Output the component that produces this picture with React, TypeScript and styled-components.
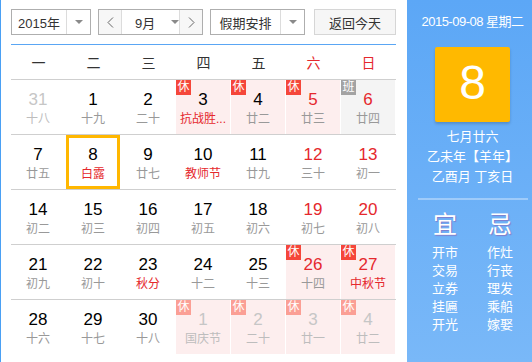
import React from 'react';
import styled, { createGlobalStyle } from 'styled-components';

const GlobalStyle = createGlobalStyle`
  html, body { margin: 0; padding: 0; background: #fff; }
  body { font-family: "Liberation Sans", "Noto Sans CJK SC", sans-serif; }
`;

const RED = '#e5282d';

const Frame = styled.div`
  width: 532px;
  height: 362px;
  display: flex;
  box-sizing: border-box;
  border-left: 1px solid #4aa0f4;
  overflow: hidden;
`;

const Main = styled.div`
  width: 406px;
  flex: none;
  box-sizing: border-box;
  padding: 9px 11px 0 10px;
`;

const Toolbar = styled.div`
  display: flex;
  height: 26px;
  gap: 7px;
`;

const SelectBox = styled.div<{ $w: number }>`
  width: ${p => p.$w}px;
  height: 26px;
  box-sizing: border-box;
  border: 1px solid #aeaeae;
  display: flex;
  align-items: stretch;
  background: #fff;
  font-size: 13px;
  color: #333;
  white-space: nowrap;
`;

const SelectLabel = styled.div`
  flex: 1;
  display: flex;
  align-items: center;
  justify-content: center;
`;

const ArrowPart = styled.div`
  width: 23px;
  border-left: 1px solid #dcdcdc;
  display: flex;
  align-items: center;
  justify-content: center;
`;

const Caret = styled.span`
  flex: none;
  width: 0;
  height: 0;
  border-left: 4px solid transparent;
  border-right: 4px solid transparent;
  border-top: 4px solid #8a8a8a;
`;

const StepButton = styled.div<{ $side: 'l' | 'r' }>`
  width: 22px;
  flex: none;
  background: #f7f7f7;
  display: flex;
  align-items: center;
  justify-content: center;
  ${p => (p.$side === 'l' ? 'border-right: 1px solid #dcdcdc;' : 'border-left: 1px solid #dcdcdc;')}
`;

const MonthCenter = styled.div`
  flex: 1;
  display: flex;
  align-items: center;
  padding-left: 13px;
  gap: 16px;
  white-space: nowrap;
`;

const TodayButton = styled.div`
  width: 82px;
  margin-left: 2px;
  height: 26px;
  box-sizing: border-box;
  border: 1px solid #d6d6d6;
  background: #f6f6f6;
  font-size: 13px;
  color: #333;
  display: flex;
  align-items: center;
  justify-content: center;
`;

const BlueRule = styled.div`
  height: 1px;
  background: #5aa6f4;
  margin-top: 9px;
`;

const WeekHead = styled.div`
  display: grid;
  grid-template-columns: repeat(7, 55px);
  height: 34px;
  border-bottom: 1px solid #cfcfcf;
`;

const WeekName = styled.div<{ $red: boolean }>`
  display: flex;
  align-items: center;
  justify-content: center;
  font-size: 14px;
  color: ${p => (p.$red ? RED : '#333')};
`;

const Row = styled.div<{ $last: boolean }>`
  display: grid;
  grid-template-columns: repeat(7, 55px);
  height: 54px;
  border-bottom: ${p => (p.$last ? 'none' : '1px solid #cfcfcf')};
`;

const Cell = styled.div<{ $bg: string; $selected: boolean }>`
  position: relative;
  box-sizing: border-box;
  height: 54px;
  border-right: 1px solid #fff;
  background: ${p => p.$bg};
  box-shadow: ${p => (p.$selected ? 'inset 0 0 0 3px #ffb700' : 'none')};
  padding-top: 10px;
  text-align: center;
`;

const DayNum = styled.div<{ $color: string }>`
  font-size: 17px;
  line-height: 20px;
  color: ${p => p.$color};
`;

const Lunar = styled.div<{ $color: string }>`
  font-size: 12px;
  line-height: 18px;
  color: ${p => p.$color};
  white-space: nowrap;
  overflow: hidden;
`;

const Badge = styled.span<{ $bg: string }>`
  position: absolute;
  left: 0;
  top: 0;
  width: 15px;
  height: 15px;
  background: ${p => p.$bg};
  color: #fff;
  font-size: 12px;
  line-height: 15px;
  text-align: center;
`;

const Side = styled.div`
  flex: 1;
  background: linear-gradient(180deg, #5ca7f6 0%, #79b8f8 100%);
  box-sizing: border-box;
  padding: 14px 0 0 6px;
  color: #fff;
  display: flex;
  flex-direction: column;
  align-items: center;
`;

const SideDate = styled.div`
  font-size: 13px;
  line-height: 16px;
  letter-spacing: -0.5px;
  white-space: nowrap;
`;

const BigDay = styled.div`
  margin-top: 17px;
  width: 75px;
  height: 75px;
  background: #ffb900;
  border-radius: 2px;
  box-shadow: 0 2px 3px rgba(0, 0, 0, 0.18);
  font-size: 48px;
  line-height: 71px;
  text-align: center;
`;

const LunarInfo = styled.div`
  margin-top: 5px;
  font-size: 13px;
  line-height: 20px;
  text-align: center;
  white-space: nowrap;
`;

const SideRule = styled.div`
  margin-top: 11px;
  width: 110px;
  height: 2px;
  background: rgba(255, 255, 255, 0.35);
`;

const YiJi = styled.div`
  margin-top: 11px;
  display: grid;
  grid-template-columns: 55px 55px;
  text-align: center;
`;

const YiJiTitle = styled.div`
  font-size: 24px;
  line-height: 28px;
  text-shadow: 1px 1px 1px rgba(150, 60, 150, 0.45);
  margin-bottom: 5px;
`;

const YiJiItem = styled.div`
  font-size: 13px;
  line-height: 18px;
`;

const ChevronLeft = () => (
  <svg width="7" height="11" viewBox="0 0 7 11">
    <polyline points="6,0.5 1,5.5 6,10.5" fill="none" stroke="#666" strokeWidth="1" />
  </svg>
);

const ChevronRight = () => (
  <svg width="7" height="11" viewBox="0 0 7 11">
    <polyline points="1,0.5 6,5.5 1,10.5" fill="none" stroke="#666" strokeWidth="1" />
  </svg>
);

type Day = {
  d: number;
  l: string;
  other?: boolean;
  fest?: boolean;
  badge?: 'rest' | 'work';
  sel?: boolean;
};

const weeks: Day[][] = [
  [
    { d: 31, l: '十八', other: true },
    { d: 1, l: '十九' },
    { d: 2, l: '二十' },
    { d: 3, l: '抗战胜...', fest: true, badge: 'rest' },
    { d: 4, l: '廿二', badge: 'rest' },
    { d: 5, l: '廿三', badge: 'rest' },
    { d: 6, l: '廿四', badge: 'work' },
  ],
  [
    { d: 7, l: '廿五' },
    { d: 8, l: '白露', fest: true, sel: true },
    { d: 9, l: '廿七' },
    { d: 10, l: '教师节', fest: true },
    { d: 11, l: '廿九' },
    { d: 12, l: '三十' },
    { d: 13, l: '初一' },
  ],
  [
    { d: 14, l: '初二' },
    { d: 15, l: '初三' },
    { d: 16, l: '初四' },
    { d: 17, l: '初五' },
    { d: 18, l: '初六' },
    { d: 19, l: '初七' },
    { d: 20, l: '初八' },
  ],
  [
    { d: 21, l: '初九' },
    { d: 22, l: '初十' },
    { d: 23, l: '秋分', fest: true },
    { d: 24, l: '十二' },
    { d: 25, l: '十三' },
    { d: 26, l: '十四', badge: 'rest' },
    { d: 27, l: '中秋节', fest: true, badge: 'rest' },
  ],
  [
    { d: 28, l: '十六' },
    { d: 29, l: '十七' },
    { d: 30, l: '十八' },
    { d: 1, l: '国庆节', other: true, badge: 'rest' },
    { d: 2, l: '二十', other: true, badge: 'rest' },
    { d: 3, l: '廿一', other: true, badge: 'rest' },
    { d: 4, l: '廿二', other: true, badge: 'rest' },
  ],
];

const weekNames = ['一', '二', '三', '四', '五', '六', '日'];
const yi = ['开市', '交易', '立券', '挂匾', '开光'];
const ji = ['作灶', '行丧', '理发', '乘船', '嫁娶'];

function cellBg(day: Day) {
  if (day.badge === 'rest') return '#fdeeee';
  if (day.badge === 'work') return '#f4f4f4';
  return '#fff';
}

function badgeBg(day: Day) {
  if (day.badge === 'work') return '#a3a3a3';
  return day.other ? '#fb9f95' : '#f5463a';
}

export default function App() {
  return (
    <>
      <GlobalStyle />
      <Frame>
        <Main>
          <Toolbar>
            <SelectBox $w={80}>
              <SelectLabel>2015年</SelectLabel>
              <ArrowPart>
                <Caret />
              </ArrowPart>
            </SelectBox>
            <SelectBox $w={105}>
              <StepButton $side="l">
                <ChevronLeft />
              </StepButton>
              <MonthCenter>
                <span>9月</span>
                <Caret />
              </MonthCenter>
              <StepButton $side="r">
                <ChevronRight />
              </StepButton>
            </SelectBox>
            <SelectBox $w={95}>
              <SelectLabel>假期安排</SelectLabel>
              <ArrowPart>
                <Caret />
              </ArrowPart>
            </SelectBox>
            <TodayButton>返回今天</TodayButton>
          </Toolbar>
          <BlueRule />
          <WeekHead>
            {weekNames.map((w, i) => (
              <WeekName key={w} $red={i >= 5}>
                {w}
              </WeekName>
            ))}
          </WeekHead>
          {weeks.map((week, ri) => (
            <Row key={ri} $last={ri === weeks.length - 1}>
              {week.map((day, ci) => {
                const numColor = day.other ? '#c6c6c6' : ci >= 5 ? RED : '#000';
                const lunarColor = day.other ? '#bdbdbd' : day.fest ? RED : '#999';
                return (
                  <Cell key={ci} $bg={cellBg(day)} $selected={!!day.sel}>
                    {day.badge && (
                      <Badge $bg={badgeBg(day)}>{day.badge === 'rest' ? '休' : '班'}</Badge>
                    )}
                    <DayNum $color={numColor}>{day.d}</DayNum>
                    <Lunar $color={lunarColor}>{day.l}</Lunar>
                  </Cell>
                );
              })}
            </Row>
          ))}
        </Main>
        <Side>
          <SideDate>2015-09-08 星期二</SideDate>
          <BigDay>8</BigDay>
          <LunarInfo>
            七月廿六
            <br />
            乙未年【羊年】
            <br />
            乙酉月 丁亥日
          </LunarInfo>
          <SideRule />
          <YiJi>
            <div>
              <YiJiTitle>宜</YiJiTitle>
              {yi.map(t => (
                <YiJiItem key={t}>{t}</YiJiItem>
              ))}
            </div>
            <div>
              <YiJiTitle>忌</YiJiTitle>
              {ji.map(t => (
                <YiJiItem key={t}>{t}</YiJiItem>
              ))}
            </div>
          </YiJi>
        </Side>
      </Frame>
    </>
  );
}
